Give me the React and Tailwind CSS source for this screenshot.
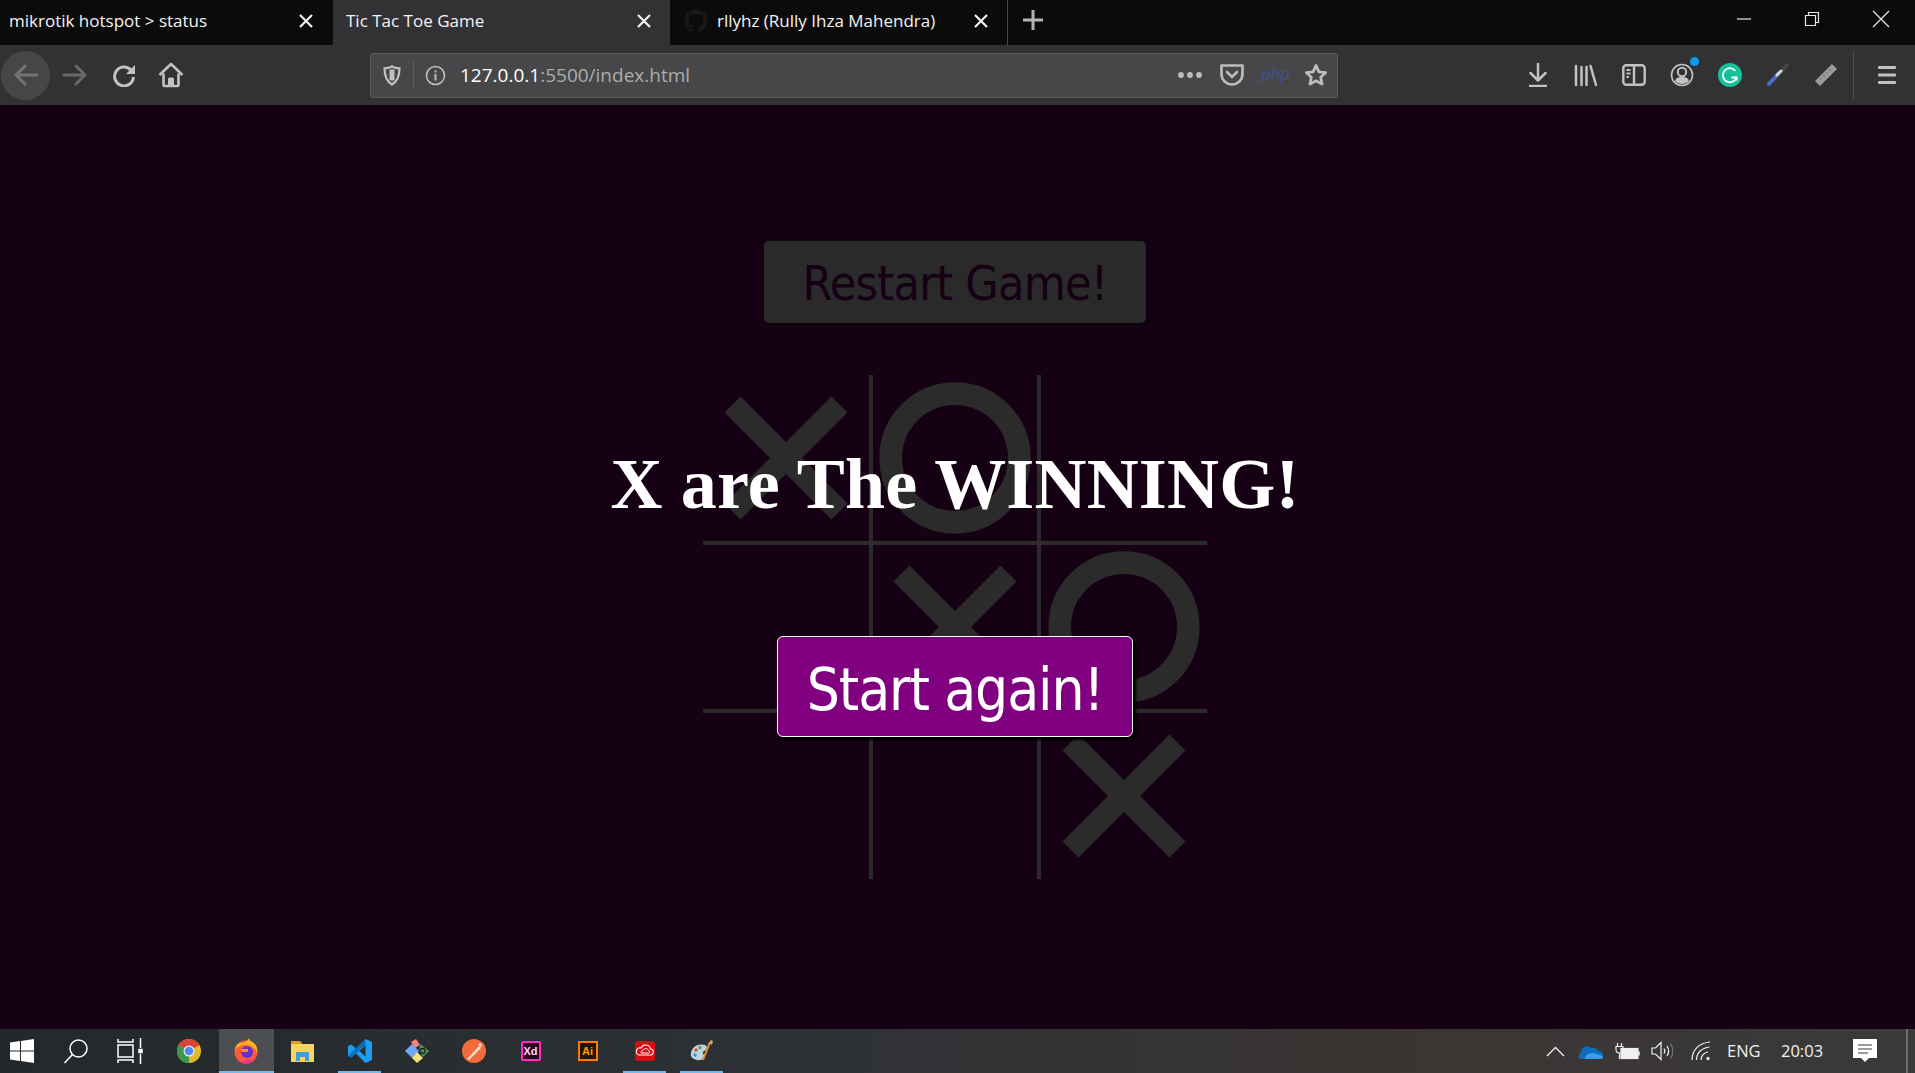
import React from "react";
import { FaGithub } from "react-icons/fa";

const UI_FONT = "font-['Open_Sans','Noto_Sans',sans-serif]";
const GAME_FONT = "font-['DejaVu_Sans_Condensed','DejaVu_Sans',sans-serif]";

const board = [
  ["x", "o", null],
  [null, "x", "o"],
  [null, null, "x"],
];

function XMark() {
  return (
    <svg width="124" height="124" viewBox="0 0 124 124" fill="#2b2b2b">
      <rect x="50.66" y="-13.6" width="22.68" height="151.2" transform="rotate(45 62 62)" />
      <rect x="50.66" y="-13.6" width="22.68" height="151.2" transform="rotate(-45 62 62)" />
    </svg>
  );
}

function OMark() {
  return (
    <svg width="152" height="152" viewBox="0 0 152 152" fill="none">
      <circle cx="76" cy="76" r="64.3" stroke="#2b2b2b" strokeWidth="22.7" />
    </svg>
  );
}

function CloseIcon() {
  return (
    <svg width="16" height="16" viewBox="0 0 16 16" stroke="#f2f2f2" strokeWidth="2.2">
      <path d="M2 2l12 12M14 2L2 14" />
    </svg>
  );
}

function Tab({ title, active, icon, close, className }) {
  return (
    <div className={`relative flex h-[45px] items-center pb-[3px] ${active ? "bg-[#323234]" : ""} ${className}`}>
      {icon}
      <span className="text-[17px] text-[#f4f4f4] whitespace-nowrap">{title}</span>
      <span className={`absolute top-[13px] ${close}`}>
        <CloseIcon />
      </span>
    </div>
  );
}

function TabStrip() {
  return (
    <div className={`flex h-[45px] bg-[#0b0b0b] ${UI_FONT}`}>
      <Tab title="mikrotik hotspot > status" className="w-[333px] pl-[9px]" close="left-[298px]" />
      <Tab title="Tic Tac Toe Game" active className="w-[337px] pl-[13px]" close="left-[303px]" />
      <Tab
        title="rllyhz (Rully Ihza Mahendra)"
        className="w-[338px] pl-[14px] border-r border-[#4a4a4c]"
        close="left-[303px]"
        icon={<FaGithub className="mr-[9px] text-[24px] text-[#191919]" />}
      />
      <div className="flex w-[50px] items-center justify-center pb-[6px]">
        <svg width="22" height="22" viewBox="0 0 22 22" stroke="#b5b5b5" strokeWidth="3">
          <path d="M11 1v20M1 11h20" />
        </svg>
      </div>
      <div className="flex-1" />
      <div className="flex items-center gap-[52px] pb-[7px] pr-[25px]">
        <svg width="16" height="16" viewBox="0 0 16 16" stroke="#e8e8e8" strokeWidth="1.2">
          <path d="M1 8h14" />
        </svg>
        <svg width="16" height="16" viewBox="0 0 16 16" fill="none" stroke="#e8e8e8" strokeWidth="1.2">
          <path d="M1.5 4.5h10v10h-10zM4.5 4.5v-3h10v10h-3" />
        </svg>
        <svg width="18" height="18" viewBox="0 0 18 18" stroke="#e8e8e8" strokeWidth="1.2">
          <path d="M1 1l16 16M17 1L1 17" />
        </svg>
      </div>
    </div>
  );
}

function NavButton({ children, className = "w-12" }) {
  return <div className={`flex h-full shrink-0 items-center justify-center ${className}`}>{children}</div>;
}

function Toolbar() {
  return (
    <div className={`flex h-[60px] items-center bg-[#323234] ${UI_FONT}`}>
      <div className="flex h-full w-[370px] shrink-0 items-center pl-px">
        <div className="flex h-[49px] w-[49px] items-center justify-center rounded-full bg-[#464648]">
          <svg width="26" height="22" viewBox="0 0 26 22" fill="none" stroke="#737375" strokeWidth="3" strokeLinecap="round" strokeLinejoin="round">
            <path d="M24 11H3M12 2l-9 9 9 9" />
          </svg>
        </div>
        <NavButton className="w-[50px]">
          <svg width="26" height="22" viewBox="0 0 26 22" fill="none" stroke="#68686a" strokeWidth="3" strokeLinecap="round" strokeLinejoin="round">
            <path d="M2 11h21M14 2l9 9-9 9" />
          </svg>
        </NavButton>
        <NavButton>
          <svg width="24" height="24" viewBox="0 0 24 24" fill="none" stroke="#c2c2c4" strokeWidth="3">
            <path d="M19 7.2A9.4 9.4 0 1 0 21.4 14" />
            <path d="M23 2v9h-9z" fill="#c2c2c4" stroke="none" />
          </svg>
        </NavButton>
        <NavButton className="w-[46px]">
          <svg width="26" height="26" viewBox="0 0 26 26" fill="none" stroke="#c2c2c4" strokeWidth="2.6" strokeLinejoin="round">
            <path d="M1.5 13L13 2l11.5 11M5.5 11.5V23a1 1 0 0 0 1 1h13a1 1 0 0 0 1-1V11.5" />
            <path d="M10 24v-7a1.5 1.5 0 0 1 1.5-1.5h3A1.5 1.5 0 0 1 16 17v7z" fill="#c2c2c4" stroke="none" />
          </svg>
        </NavButton>
      </div>

      <div className="flex h-[45px] w-[968px] shrink-0 items-center rounded-[3px] border border-[#58585a] bg-[#474749]">
        <div className="flex w-[42px] justify-center">
          <svg width="18" height="21" viewBox="0 0 18 21" fill="none" stroke="#c0c0c2" strokeWidth="2.2">
            <path d="M9 1.5c2.5 1.3 5 1.8 7.5 1.8 0 7-1.5 12.8-7.5 16.2C3 16.1 1.5 10.3 1.5 3.3 4 3.3 6.5 2.8 9 1.5z" />
            <path d="M9 4.5v11" strokeWidth="5" />
          </svg>
        </div>
        <div className="h-[29px] w-px bg-[#5d5d5f]" />
        <div className="flex w-[42px] justify-center">
          <svg width="21" height="21" viewBox="0 0 21 21" fill="none" stroke="#bdbdbf" strokeWidth="1.6">
            <circle cx="10.5" cy="10.5" r="9" />
            <path d="M10.5 9v6.5M10.5 5.5v2" strokeWidth="2" />
          </svg>
        </div>
        <span className="ml-[4px] text-[19px] text-white whitespace-nowrap">
          127.0.0.1<span className="text-[#acacae]">:5500/index.html</span>
        </span>
        <div className="flex-1" />
        <NavButton className="w-[42px]">
          <svg width="24" height="6" viewBox="0 0 24 6" fill="#bdbdbf">
            <circle cx="3" cy="3" r="2.9" />
            <circle cx="12" cy="3" r="2.9" />
            <circle cx="21" cy="3" r="2.9" />
          </svg>
        </NavButton>
        <NavButton className="w-[42px]">
          <svg width="24" height="22" viewBox="0 0 24 22" fill="none" stroke="#bdbdbf" strokeWidth="2.6">
            <path d="M1.5 1.5h21V10a10.5 10.5 0 0 1-21 0z" strokeLinejoin="round" />
            <path d="M7 8l5 5 5-5" strokeLinecap="round" />
          </svg>
        </NavButton>
        <NavButton className="w-[42px]">
          <span className="pl-[3px] text-[17px] italic text-[#41508f] font-['Liberation_Sans',sans-serif]">php</span>
        </NavButton>
        <NavButton className="w-[42px]">
          <svg width="24" height="24" viewBox="0 0 24 24" fill="none" stroke="#bdbdbf" strokeWidth="2.8" strokeLinejoin="round">
            <path d="M12 2.5l2.9 6.3 6.8.8-5 4.700 1.300 6.800-6-3.400-6 3.400 1.300-6.800-5-4.700 6.800-.8z" />
          </svg>
        </NavButton>
      </div>

      <div className="ml-[176px] flex h-full items-center">
        <NavButton>
          <svg width="20" height="24" viewBox="0 0 20 24" fill="none" stroke="#c2c2c4" strokeWidth="2.5" strokeLinecap="round" strokeLinejoin="round">
            <path d="M10 1v16M2.5 10l7.5 7.5 7.5-7.5" />
            <path d="M1 23h18" strokeLinecap="butt" />
          </svg>
        </NavButton>
        <NavButton>
          <svg width="24" height="23" viewBox="0 0 24 23" fill="none" stroke="#c2c2c4" strokeWidth="2.5" strokeLinecap="round">
            <path d="M2 2v19M7.5 3v18M12.5 3v18M16.5 2l5.5 19" />
          </svg>
        </NavButton>
        <NavButton>
          <svg width="24" height="22" viewBox="0 0 24 22" fill="none" stroke="#c2c2c4" strokeWidth="2.4">
            <rect x="1.3" y="1.3" width="21.4" height="19.4" rx="3" />
            <path d="M12 1v20" />
            <path d="M4.5 6h4M4.5 9.5h4M4.5 13h2.5" strokeWidth="1.8" />
          </svg>
        </NavButton>
        <NavButton>
          <div className="relative h-[24px] w-[24px]">
            <svg width="24" height="24" viewBox="0 0 24 24" fill="none" stroke="#c2c2c4">
              <circle cx="12" cy="12" r="10.5" strokeWidth="1.6" />
              <circle cx="12" cy="9" r="4.2" strokeWidth="2" />
              <path d="M5 18c1-3.500 3.500-4 7-4s6 .5 7 4c-2 2-4.500 3-7 3s-5-1-7-3z" fill="#c2c2c4" stroke="none" />
            </svg>
            <span className="absolute -right-[5px] -top-[6px] h-[9px] w-[9px] rounded-full bg-[#0a9dee]" />
          </div>
        </NavButton>
        <NavButton>
          <svg width="24" height="24" viewBox="0 0 24 24" fill="none">
            <circle cx="12" cy="12" r="12" fill="#15c39a" />
            <path d="M17.5 8A7 7 0 1 0 18.5 14.5h-5" stroke="#fff" strokeWidth="1.8" />
            <path d="M18.5 14.5v3" stroke="#fff" strokeWidth="1.8" />
          </svg>
        </NavButton>
        <NavButton>
          <svg width="24" height="24" viewBox="0 0 24 24" fill="none" strokeLinecap="round">
            <path d="M15 9l6-7" stroke="#4c4c4e" strokeWidth="3" />
            <path d="M3 21l9-10" stroke="#4b6bc4" strokeWidth="4" />
            <path d="M11 12l4-4" stroke="#d6d6d8" strokeWidth="3" />
          </svg>
        </NavButton>
        <NavButton>
          <svg width="24" height="24" viewBox="0 0 24 24">
            <path d="M18 1l5 5L6 23l-5-5z" fill="#9a9a9c" />
            <path d="M6 15l1.5 1.5M9 12l2 2M12 9l1.5 1.5M15 6l2 2" stroke="#6a6a6c" strokeWidth="1" />
          </svg>
        </NavButton>
        <div className="ml-[3px] h-[50px] w-px bg-[#4d4d4f]" />
        <NavButton className="w-[66px]">
          <svg width="18" height="18" viewBox="0 0 18 18" fill="#c2c2c4">
            <rect y="0" width="18" height="3" rx="1" />
            <rect y="7.5" width="18" height="3" rx="1" />
            <rect y="15" width="18" height="3" rx="1" />
          </svg>
        </NavButton>
      </div>
    </div>
  );
}

function Game() {
  return (
    <main className="relative flex flex-1 flex-col items-center bg-[#150014] pr-[5px] pt-[136px]">
      <button className={`h-[82px] w-[382px] rounded-[5px] bg-[#2a2a2a] pt-[2px] text-[48px] tracking-[-0.75px] text-[#150014] shadow-[1px_1px_2px_#0c000c] ${GAME_FONT}`}>
        Restart Game!
      </button>

      <div className="mt-[52px] grid grid-cols-[166px_172px_166px] grid-rows-[166px_172px_166px]">
        {board.map((row, r) =>
          row.map((mark, c) => (
            <div
              key={`${r}-${c}`}
              className={`flex items-center justify-center border-[#2b2b2b] ${c === 1 ? "border-x-4" : ""} ${r === 1 ? "border-y-4" : ""}`}
            >
              {mark === "x" && <XMark />}
              {mark === "o" && <OMark />}
            </div>
          ))
        )}
      </div>

      {/* overlay de fim de jogo */}
      <div className="absolute inset-0 flex flex-col items-center pr-[5px] pt-[339px]">
        <h1 className="text-[72px] font-bold leading-[80px] tracking-[0.17px] text-white font-['Liberation_Serif',serif]">
          X are The WINNING!
        </h1>
        <button className={`mt-[112px] h-[101px] w-[356px] rounded-[6px] border border-white bg-[#800080] pt-[7px] text-[58px] tracking-[-1.1px] text-white shadow-[3px_3px_3px_#000] ${GAME_FONT}`}>
          Start again!
        </button>
      </div>
    </main>
  );
}

function TaskItem({ children, className = "w-[57px]", underline }) {
  return (
    <div className={`relative flex h-full shrink-0 items-center justify-center ${className}`}>
      {children}
      {underline && <span className={`absolute bottom-0 h-[2px] bg-[#76b9ed] ${underline}`} />}
    </div>
  );
}

function Taskbar() {
  return (
    <div className="flex h-[44px] items-center bg-[linear-gradient(90deg,#23282b_0%,#2d3135_40%,#3a3533_72%,#3a3a3a_100%)]">
      <TaskItem className="w-[44px]">
        <svg width="24" height="24" viewBox="0 0 24 24" fill="#fff">
          <path d="M0 3.5l10-1.400v9.400H0zM11 2l13-2v11.500H11zM0 12.500h10v9.400L0 20.500zM11 12.500h13V24l-13-2z" />
        </svg>
      </TaskItem>
      <TaskItem className="w-[64px]">
        <svg width="26" height="26" viewBox="0 0 26 26" fill="none" stroke="#fff" strokeWidth="1.5">
          <circle cx="15.5" cy="10.5" r="8.5" />
          <path d="M9.5 16.5L1.5 25" />
        </svg>
      </TaskItem>
      <TaskItem className="w-[44px]">
        <svg width="26" height="26" viewBox="0 0 26 26" fill="none" stroke="#fff" strokeWidth="1.5">
          <path d="M1 1v3h15V1M1 25v-3h15v3M1 7h15v12H1zM23.5 0v10M23.5 16v10" />
          <path d="M22 11.5h3v3h-3z" fill="#fff" />
        </svg>
      </TaskItem>
      <TaskItem className="ml-[8px] w-[59px]">
        <svg width="24" height="24" viewBox="0 0 24 24" className="mr-[2px]">
          <circle cx="12" cy="12" r="12" fill="#e0b930" />
          <path d="M12 12L1.600 6A12 12 0 0 1 22.400 6z" fill="#d9443a" />
          <path d="M12 12L1.600 6A12 12 0 0 0 12 24z" fill="#3d9650" />
          <circle cx="12" cy="12" r="5.5" fill="#eee" />
          <circle cx="12" cy="12" r="4.3" fill="#4a8af4" />
        </svg>
      </TaskItem>
      <TaskItem className="w-[55px] bg-[#4b4f52]" underline="inset-x-0">
        <svg width="24" height="26" viewBox="0 0 24 26" className="mr-[2px]">
          <circle cx="12" cy="14" r="11.5" fill="#ff5a3c" />
          <path d="M1 12C2 5 7 4 9 5c3-1 5-3 6-5 1 2 0 2 2 3 4 2 7 6 6 12-2-5-6-8-11-8S3 9 1 12z" fill="#ffb01f" />
          <path d="M3 22c5 5 14 5 18-2-5 3-12 4-18 2z" fill="#ff2e8e" />
          <circle cx="13" cy="14" r="6" fill="#6b2fd0" />
          <path d="M6 11h8v3H8z" fill="#ff8f2b" />
        </svg>
      </TaskItem>
      <TaskItem>
        <svg width="23" height="22" viewBox="0 0 23 22">
          <path d="M0 1h9l2 2v2H0z" fill="#d9a020" />
          <path d="M0 4h23v18H0z" fill="#fbd35f" />
          <path d="M5 21v-9h13v9h-4v-4H9v4z" fill="#3f9de0" />
        </svg>
      </TaskItem>
      <TaskItem underline="left-[7px] right-[7px]">
        <svg width="24" height="24" viewBox="0 0 24 24">
          <path d="M17.5 0L24 3v18l-6.500 3L8 14.500 3 18.500 0 17V7l3-1.500 5 4zM17.500 6.500L11.500 12l6 5.500z" fill="#1f9cf0" fillRule="evenodd" />
          <path d="M17.5 0L3 14l-3 3 3 1.500L17.500 6.500z" fill="#0a70b8" />
        </svg>
      </TaskItem>
      <TaskItem>
        <svg width="24" height="24" viewBox="0 0 24 24" fill="none">
          <path d="M6 3l5-3 4 6-5 3z" fill="#f4827e" />
          <path d="M0 12l7-7 7 7-7 7z" fill="#6ea8f2" />
          <path d="M7 19l5-6 6 6-6 5z" fill="#f6e27a" />
          <path d="M15 5l9 7-6 6-4-6z" fill="#4c9a52" />
          <circle cx="17.5" cy="12" r="2.5" stroke="#23282b" strokeWidth="1.5" />
        </svg>
      </TaskItem>
      <TaskItem>
        <svg width="24" height="24" viewBox="0 0 24 24">
          <circle cx="12" cy="12" r="12" fill="#f26b3a" />
          <path d="M5 20L17 7l2 2-12 12z" fill="#fde0d0" />
          <path d="M16 5l3-1 1 3-2 1z" fill="#fde0d0" />
        </svg>
      </TaskItem>
      <TaskItem>
        <div className="flex h-[20px] w-[20px] items-center justify-center rounded-[2px] border-2 border-[#ff2bc2] bg-[#2e001f] text-[11px] font-bold text-[#ffd9f4] font-['Liberation_Sans',sans-serif]">
          Xd
        </div>
      </TaskItem>
      <TaskItem>
        <div className="flex h-[20px] w-[20px] items-center justify-center border-2 border-[#ff7c00] bg-[#261300] text-[11px] font-bold text-[#ff9a00] font-['Liberation_Sans',sans-serif]">
          Ai
        </div>
      </TaskItem>
      <TaskItem underline="left-[7px] right-[7px]">
        <svg width="20" height="20" viewBox="0 0 20 20" fill="none">
          <rect width="20" height="20" rx="3" fill="#d40f14" />
          <path d="M4 14h11a3 3 0 0 0 .5-6 5 5 0 0 0-9.500-1A3.500 3.500 0 0 0 4 14z" stroke="#fff" strokeWidth="1.1" />
          <path d="M6.5 12h7c1.500 0 1.500-2.500 0-2.500-1-2.500-4.500-2.500-5.500 0-2 0-2.500 2.500-1.500 2.500z" stroke="#fff" strokeWidth="1" />
        </svg>
      </TaskItem>
      <TaskItem underline="left-[7px] right-[7px]">
        <svg width="24" height="24" viewBox="0 0 24 24">
          <path d="M1 14C2 7 9 4 15 6c3 1 2 5-1 6-2 1-1 3 0 4 2 3-3 6-7 5-4-1-7-3-6-7z" fill="#bcd6de" />
          <circle cx="6" cy="11" r="1.7" fill="#d9473d" />
          <circle cx="10" cy="8.5" r="1.7" fill="#4fa65a" />
          <circle cx="5" cy="16" r="1.7" fill="#3f8fd8" />
          <path d="M13 21L20 3" stroke="#e8922b" strokeWidth="2" />
          <path d="M19 4l2-3 2 1-1 4z" fill="#c8a46a" />
        </svg>
      </TaskItem>

      <div className="flex-1" />

      <div className={`flex h-full items-center text-[16.5px] text-[#f0f0f0] ${UI_FONT}`}>
        <TaskItem className="w-[36px]">
          <svg width="19" height="11" viewBox="0 0 19 11" fill="none" stroke="#f0f0f0" strokeWidth="1.3">
            <path d="M1 10l8.500-8.500L18 10" />
          </svg>
        </TaskItem>
        <TaskItem className="w-[36px]">
          <svg width="25" height="15" viewBox="0 0 25 15">
            <path d="M3 15a3 3 0 0 1-1-6 6 6 0 0 1 10-5 5 5 0 0 1 7 3 4 4 0 0 1 2 8z" fill="#0f6cbd" />
            <path d="M6 15c0-3 3-6 7-6 3 0 5 1 8 2 4 1 4 4 0 4z" fill="#2ea3ea" />
          </svg>
        </TaskItem>
        <TaskItem className="w-[36px]">
          <svg width="25" height="18" viewBox="0 0 25 18" fill="none" stroke="#f0f0f0" strokeWidth="1.2">
            <path d="M4.5 17v-6M1 4.500v3a3 3 0 0 0 7 0v-3zM2.500 1v3M6.500 1v3" />
            <rect x="6" y="6.5" width="17" height="10" fill="#f0f0f0" />
            <path d="M24 9.5v4" strokeWidth="1.6" />
          </svg>
        </TaskItem>
        <TaskItem className="w-[34px]">
          <svg width="23" height="20" viewBox="0 0 23 20" fill="none" stroke="#f0f0f0" strokeWidth="1.2">
            <path d="M1 7v6h3.500L10 18.500V1.500L4.500 7z" />
            <path d="M13 7.500c1 1.500 1 3.500 0 5M16 5c2 3 2 7 0 10" />
            <path d="M19.5 2.500c3 4.500 3 10.500 0 15" stroke="#7c7c7c" />
          </svg>
        </TaskItem>
        <TaskItem className="w-[44px]">
          <svg width="20" height="20" viewBox="0 0 20 20" fill="none" stroke="#f0f0f0" strokeWidth="1.2">
            <path d="M1 19C1 9 8 2 19 1M5.500 19c0-7 5-12 13-13M10 19c0-4 3-7.500 7-8" />
            <circle cx="17" cy="17.5" r="1.7" fill="#f0f0f0" stroke="none" />
          </svg>
        </TaskItem>
        <span className="ml-[4px] w-[54px]">ENG</span>
        <span className="w-[72px]">20:03</span>
        <TaskItem className="w-[24px]">
          <svg width="24" height="24" viewBox="0 0 24 24" fill="#fff">
            <path d="M0 0h24v19h-8l-4 4-4-4H0z" />
            <path d="M5 6h14M5 10h14M5 14h10" stroke="#3a3a3a" strokeWidth="1" />
          </svg>
        </TaskItem>
        <div className="ml-[29px] h-full w-[2px] bg-[#6d6d6d]" />
        <div className="w-[7px]" />
      </div>
    </div>
  );
}

export default function App() {
  return (
    <div className="flex h-screen flex-col overflow-hidden bg-[#150014]">
      <TabStrip />
      <Toolbar />
      <Game />
      <Taskbar />
    </div>
  );
}
